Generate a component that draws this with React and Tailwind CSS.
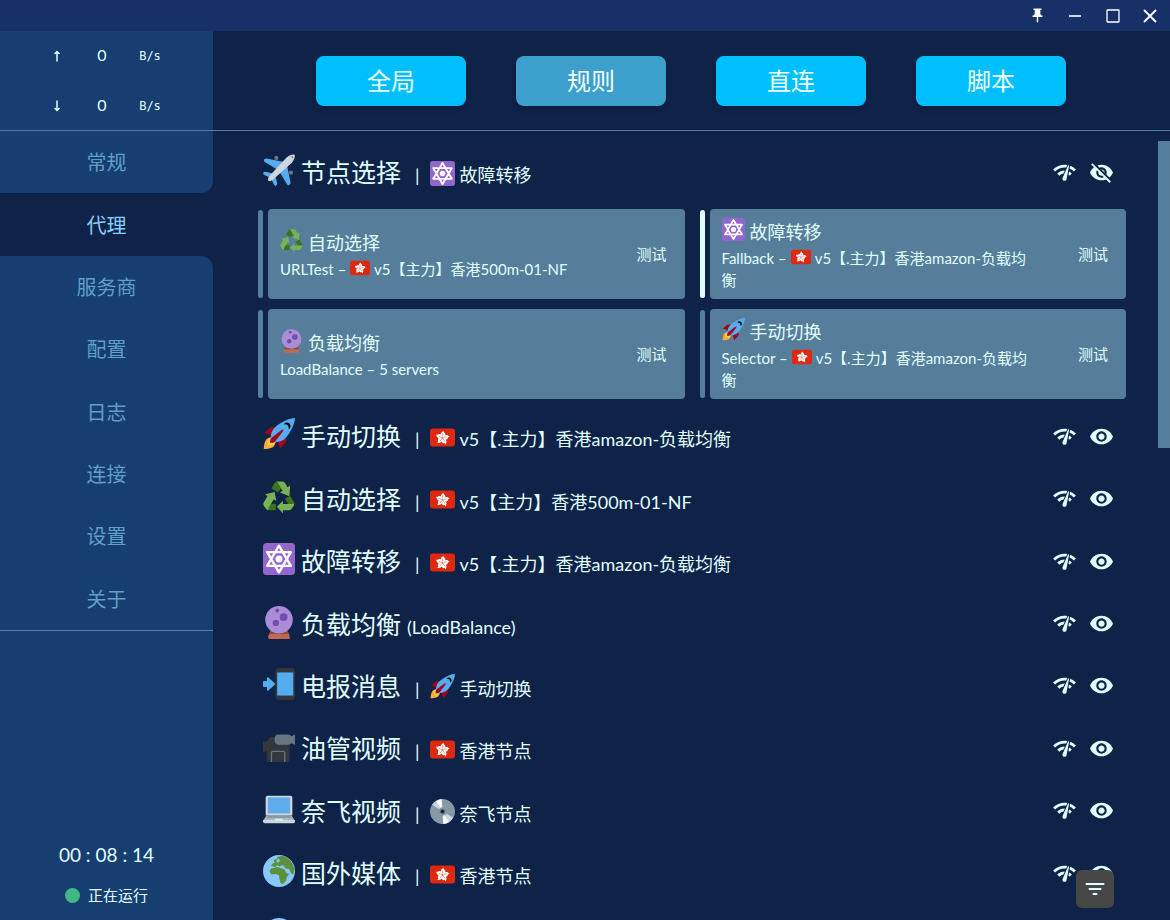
import React from "react";
import { MdNetworkCheck, MdVisibility, MdVisibilityOff, MdPushPin } from "react-icons/md";

const drawings = {
  plane: (
    <>
      <g fill="#66757f">
        <circle cx="15" cy="4.5" r="2.4" />
        <circle cx="31.500" cy="21" r="2.4" />
        <circle cx="8" cy="28" r="1.5" />
      </g>
      <path fill="#55acee" d="M1 6.500Q2 5 4 5l20 4-7 9L2 9Q.5 8 1 6.500zM29.500 35Q31 34 31 32l-4-20-9 7 9 15q1 1.500 2.500 1zM0 21.500Q1 20 3 20l8 2-3 4.500-6-2.500Q0 23 0 21.500zM14.500 36q1.500-1 1.500-3l-2-8-4.500 3 2.500 6q1 2 2.500 2z" />
      <path fill="#ccd6dd" d="M35.500.8c1 2-.5 6-3 9L12 28c-2 2-5 3-6 2s0-4 2-6L26.500 4C29.500 1 34 0 35.500.8z" />
      <path fill="#66757f" d="M31 3l2.500-.5.500 2.500z" />
    </>
  ),
  star: (
    <>
      <rect width="36" height="36" rx="4" fill="#9266cc" />
      <g fill="none" stroke="#fff" strokeWidth="2.700" strokeLinejoin="round">
        <path d="M18 3 31.300 25.700H4.700zM18 33 4.700 10.300h26.600z" />
      </g>
      <circle cx="18" cy="18" r="4" fill="#fff" />
    </>
  ),
  recycle: (
    <>
      <path fill="#3e721d" d="M9.500 8.500 13 2q2-2 4 0l3.500 6-3.500 5zM6 33h8.500v-7.500H6L3 30zM24.500 20l6-3.500L35 24q.5 2-1 2.500l-5 .5z" />
      <path fill="#77b255" d="M14.500.5H22q2 0 3 2L27.500 7l3-1.800-.8 12L19 13l3-2-5-8.500Q16 1 14.500.5zM2.500 15l10.500-2.500 2 9.800-3-1.500-5.500 9q-1 2 0 3.200Q4.500 33 3 31L.8 27.500q-1-1.500 0-3.200L5 17.200zM15.500 29l7-6.800v3.600h10Q34.500 25.800 35 25q.2 2-.5 3L32 31.500Q31 33 29 33h-6.500v3.200z" />
    </>
  ),
  rocket: (
    <>
      <path fill="#A0041E" d="M1 17l8-7 16 1 1 16-7 8s.001-5.999-6-12-12-6-12-6z" />
      <path fill="#FFAC33" d="M.973 35s-.036-7.979 2.985-11S15 21.187 15 21.187 14.999 29 11.999 32c-3 3-11.026 3-11.026 3z" />
      <circle fill="#FFCC4D" cx="8.999" cy="27" r="4" />
      <path fill="#55ACEE" d="M35.999 0s-10 0-22 10c-6 5-6 14-4 16s11 2 16-4c10-12 10-22 10-22z" />
      <path d="M26.999 5c-1.623 0-3.013.971-3.641 2.360.502-.227 1.055-.360 1.641-.360 2.209 0 4 1.791 4 4 0 .586-.133 1.139-.359 1.640 1.389-.627 2.359-2.017 2.359-3.640 0-2.209-1.791-4-4-4z" />
      <path fill="#A0041E" d="M8 28s0-4 1-5 13.001-10.999 14-10-9.001 13-10.001 14S8 28 8 28z" />
    </>
  ),
  ball: (
    <>
      <path fill="#bf6952" d="M9 27h18l3 6.500V36a1 1 0 0 1-1 1H7a1 1 0 0 1-1-1v-2.500z" />
      <path fill="#8a4633" d="M8 29h20l1 2.500H7z" />
      <circle cx="18" cy="15.500" r="15.500" fill="#aa8dd8" />
      <g fill="#744eaa">
        <circle cx="16" cy="5" r="2.200" />
        <circle cx="23.200" cy="12.500" r="4.400" />
        <circle cx="14.500" cy="19" r="3.500" />
      </g>
    </>
  ),
  flag: (
    <>
      <rect y="5" width="36" height="26" rx="4" fill="#de2910" />
      <g fill="#fff">
        {[0, 72, 144, 216, 288].map((a) => (
          <path key={a} transform={`rotate(${a + 8} 18 18.500)`} d="M18 18c-3.800-2.200-4.500-7 .5-10 -1 2 1.200 2.600 2.200 3.600 2 2.500 0 5.600-2.700 6.400z" />
        ))}
      </g>
      <g stroke="#de2910" strokeWidth=".6">
        {[0, 72, 144, 216, 288].map((a) => (
          <path key={a} transform={`rotate(${a + 8} 18 18.500)`} d="M18 17.500 17.300 12.500" />
        ))}
      </g>
    </>
  ),
  phone: (
    <>
      <rect x="14" width="22" height="36" rx="4" fill="#31373d" />
      <rect x="16" y="5" width="18" height="26" fill="#55acee" />
      <path fill="#55acee" stroke="#55acee" strokeWidth="2" strokeLinejoin="round" d="M1 15.500h4.500v-4l7 6.500-7 6.500v-4H1z" />
    </>
  ),
  camera: (
    <>
      <path fill="#31373d" d="M0 13q4 0 5-1l3-4h16v6h6v18q0 4-4 4H8q-4 0-4-4v-8L0 25z" />
      <path fill="#66757f" d="M17 5h11q3 0 4 2l4-2v12l-4-2q-1 1.500-4 1.500H17q-4 0-4-5.700T17 5z" />
      <path fill="none" stroke="#66757f" strokeWidth="1.500" d="M9.500 36V26q0-2 2-2h11q2 0 2 2v10" />
    </>
  ),
  laptop: (
    <>
      <path fill="#ccd6dd" d="M5 3h26q2 0 2 2v20H3V5q0-2 2-2z" />
      <path fill="#5dadec" d="M5.500 5h25v18h-25z" />
      <path fill="#aab8c2" d="M4 25h28l4 6.500H0z" />
      <path fill="#8899a6" d="M5.500 26h25l1.500 2H4z" />
      <path fill="#ccd6dd" d="M0 30.500h36V32q0 2-2 2H2q-2 0-2-2z" />
      <path fill="#e1e8ed" d="M14 29h8l1 2H13z" />
    </>
  ),
  disc: (
    <>
      <circle cx="18" cy="18" r="18" fill="#8899a6" />
      <path fill="#f5f8fa" d="M18 18 8 3.200Q12 .5 17 0zM18 18l1 18q5-.5 9-3z" />
      <path fill="#ccd6dd" d="M18 18 3 8l5-4.800zM18 18l10 15 5.500-6z" />
      <circle cx="18" cy="18" r="6" fill="#8899a6" />
      <circle cx="18" cy="18" r="4" fill="#657786" />
      <circle cx="18" cy="18" r="2.500" fill="#14213d" />
    </>
  ),
  globe: (
    <>
      <circle cx="18" cy="18" r="18" fill="#88c9f9" />
      <path fill="#5c913b" d="M9 12.500q1-3 4-4l-1-3 3-1L17 2l5-1.200c7 2 12 8 13.500 15.200l-1.500 6-2-1-2.500-5-4.500-1-1.500-3-3-.5-1.500 1.500-3-1.500-2 2zM8.500 15.500 16 13.500l8 2.500 2.500 4.500 3 .5-3 4.500-.5 3.500-3.500 3.500-2.500-.5-1.500-5-.5-4-3.500-1.500-5 .5-2-3z" />
      <path fill="#88c9f9" d="M15 5.500 18 4l1 3-3 2z" />
    </>
  ),
  ocean: (
    <>
      <circle cx="18" cy="18" r="18" fill="#88c9f9" />
      <path fill="#5c913b" d="M8 10l10-3 9 4 3 9-8 8-9-6z" />
    </>
  ),
};

function Emoji({ name, className }) {
  return (
    <svg viewBox="0 0 36 36" aria-hidden="true" className={`shrink-0 overflow-visible ${className}`}>
      {drawings[name]}
    </svg>
  );
}

const modes = [
  { label: "全局" },
  { label: "规则", active: true },
  { label: "直连" },
  { label: "脚本" },
];

const menu = ["常规", "代理", "服务商", "配置", "日志", "连接", "设置", "关于"];
const current = 1;

const cards = [
  { icon: "recycle", title: "自动选择", type: "URLTest –", node: "v5【主力】香港500m-01-NF" },
  { icon: "star", title: "故障转移", type: "Fallback –", node: "v5【.主力】香港amazon-负载均衡", selected: true },
  { icon: "ball", title: "负载均衡", type: "LoadBalance – 5 servers" },
  { icon: "rocket", title: "手动切换", type: "Selector –", node: "v5【.主力】香港amazon-负载均衡" },
];

const groups = [
  { icon: "rocket", title: "手动切换", nowIcon: "flag", now: "v5【.主力】香港amazon-负载均衡" },
  { icon: "recycle", title: "自动选择", nowIcon: "flag", now: "v5【主力】香港500m-01-NF" },
  { icon: "star", title: "故障转移", nowIcon: "flag", now: "v5【.主力】香港amazon-负载均衡" },
  { icon: "ball", title: "负载均衡", note: "(LoadBalance)" },
  { icon: "phone", title: "电报消息", nowIcon: "rocket", now: "手动切换" },
  { icon: "camera", title: "油管视频", nowIcon: "flag", now: "香港节点" },
  { icon: "laptop", title: "奈飞视频", nowIcon: "disc", now: "奈飞节点" },
  { icon: "globe", title: "国外媒体", nowIcon: "flag", now: "香港节点" },
  { icon: "ocean" },
];

function GroupRow({ group, open }) {
  const Eye = open ? MdVisibilityOff : MdVisibility;
  return (
    <div className="flex h-full items-center justify-between pr-3 pl-[5px]">
      <div className="flex min-h-10 items-baseline pt-1 whitespace-nowrap">
        <Emoji name={group.icon} className="mb-2 size-8 self-center" />
        {group.title && <h2 className="ml-1.5 text-[25px] leading-9">{group.title}</h2>}
        {group.note && <span className="ml-1.5 text-lg leading-6">{group.note}</span>}
        {group.now && (
          <>
            <span className="ml-3.5 text-lg leading-6">|</span>
            <Emoji name={group.nowIcon} className="mb-0.5 ml-2.5 size-[25px] self-center" />
            <span className="ml-[5px] text-lg leading-6">{group.now}</span>
          </>
        )}
      </div>
      <div className="flex gap-3">
        <button type="button" aria-label="测试延迟"><MdNetworkCheck className="size-[25px]" /></button>
        <button type="button" aria-label="显示或隐藏"><Eye className="size-[25px]" /></button>
      </div>
    </div>
  );
}

function ProxyCard({ card }) {
  return (
    <div className="flex gap-[5px]">
      <div className={`my-px w-[5px] shrink-0 rounded-sm ${card.selected ? "bg-[#e0ffff]" : "bg-[#567d99]"}`} />
      <div className="flex min-h-[90px] flex-1 items-center justify-between rounded bg-[#567d99] pr-[18px] pl-3">
        <div className="max-w-[310px]">
          <div className="flex items-center">
            <Emoji name={card.icon} className="mb-1.5 size-[23px]" />
            <h3 className="ml-[5px] text-lg leading-[30px]">{card.title}</h3>
          </div>
          <p className="text-[15px] leading-[22px]">
            {card.type}
            {card.node && (
              <>
                <Emoji name="flag" className="mx-1 -mt-1.5 inline-block size-5" />
                {card.node}
              </>
            )}
          </p>
        </div>
        <button type="button" className="text-[15px] leading-[22px]">测试</button>
      </div>
    </div>
  );
}

function Traffic({ up }) {
  return (
    <div className="grid h-[50px] grid-cols-[46px_44px_52px] items-center pl-[34px] text-center">
      <svg viewBox="0 0 8 12" role="img" aria-label={up ? "上传" : "下载"} className="mx-auto h-3 w-2" fill="none" stroke="currentColor" strokeWidth="1.500">
        {up ? <path d="M4 11.500V1.500M1.500 4 4 1.500 6.500 4" /> : <path d="M4 .5v10M1.500 8 4 10.500 6.500 8" />}
      </svg>
      <span className="pb-0.5 text-base">0</span>
      <span className="font-['DejaVu_Sans_Mono',monospace] text-xs">B/s</span>
    </div>
  );
}

function menuStyle(i) {
  if (i === current - 1) return "bg-[#163e70] text-[#5f9fc8] rounded-br-xl";
  if (i === current) return "text-[#87cefa]";
  if (i === current + 1) return "bg-[#163e70] text-[#5f9fc8] rounded-tr-xl";
  return "bg-[#163e70] text-[#5f9fc8]";
}

export default function App() {
  return (
    <div className="flex h-screen flex-col overflow-hidden bg-[#0f2247] font-[Lato,'Noto_Sans_CJK_SC',sans-serif] text-[#e0ffff]">
      <header className="flex h-[31px] shrink-0 justify-end bg-[#173168] pr-px text-white">
        <div className="grid w-[150px] grid-cols-4">
          <button type="button" aria-label="置顶" className="flex items-center justify-center"><MdPushPin className="size-[17px]" /></button>
          <button type="button" aria-label="最小化" className="flex items-center justify-center">
            <svg viewBox="0 0 14 14" className="size-3.5"><path d="M1 7h12" stroke="currentColor" strokeWidth="1.600" /></svg>
          </button>
          <button type="button" aria-label="最大化" className="flex items-center justify-center">
            <svg viewBox="0 0 14 14" className="size-3.5"><rect x="1" y="1" width="12" height="12" rx=".5" fill="none" stroke="currentColor" strokeWidth="1.300" /></svg>
          </button>
          <button type="button" aria-label="关闭" className="flex items-center justify-center">
            <svg viewBox="0 0 14 14" className="size-3.5"><path d="M1.500 1.500l11 11m0-11-11 11" stroke="currentColor" strokeWidth="1.800" strokeLinecap="round" /></svg>
          </button>
        </div>
      </header>
      <div className="flex min-h-0 flex-1">
        <aside className="flex w-[213px] shrink-0 flex-col">
          <div className="h-[100px] border-b border-[#567d99] bg-[#163e70]">
            <Traffic up />
            <Traffic />
          </div>
          <nav className="grid h-[499px] shrink-0 grid-rows-8">
            {menu.map((label, i) => (
              <a key={label} href="#" className={`flex items-center justify-center text-xl ${menuStyle(i)}`}>{label}</a>
            ))}
          </nav>
          <div className="flex flex-1 flex-col items-center justify-end gap-3 border-t border-[#567d99] bg-[#163e70] pb-[13px]">
            <div className="text-[19px] leading-8">00 : 08 : 14</div>
            <div className="flex items-center gap-2 text-[15px] leading-6">
              <span className="size-[15px] rounded-full bg-[#41b883]" />
              正在运行
            </div>
          </div>
        </aside>
        <main className="relative flex min-w-0 flex-1 flex-col">
          <div className="flex h-[100px] shrink-0 items-center justify-center gap-[50px] border-b border-[#567d99] pr-px">
            {modes.map((m) => (
              <button key={m.label} type="button" className={`h-[50px] w-[150px] rounded-lg text-2xl text-[#f0ffff] shadow-md ${m.active ? "bg-[#3d9fcb]" : "bg-[#00bfff]"}`}>{m.label}</button>
            ))}
          </div>
          <div className="flex min-h-0 flex-1 pt-2.5">
            <div className="min-w-0 flex-1 overflow-hidden pr-8 pl-[45px]">
              <div className="h-[62px]">
                <GroupRow open group={{ icon: "plane", title: "节点选择", nowIcon: "star", now: "故障转移" }} />
              </div>
              <div className="my-1.5 grid grid-cols-2 gap-x-[15px] gap-y-2.5">
                {cards.map((c) => <ProxyCard key={c.title} card={c} />)}
              </div>
              <div className="grid h-[562px] grid-rows-9">
                {groups.map((g, i) => <GroupRow key={i} group={g} />)}
              </div>
            </div>
            <div className="h-[307px] w-3 shrink-0 bg-[#567d99]" />
          </div>
          <button type="button" aria-label="筛选" className="absolute right-14 bottom-3 flex size-[38px] items-center justify-center rounded-md bg-[#474747]">
            <svg viewBox="0 0 20 14" className="h-3.5 w-5" fill="none" stroke="currentColor" strokeWidth="2" strokeLinecap="round"><path d="M1.500 2h17M4.500 7h11M8.500 12h3" /></svg>
          </button>
        </main>
      </div>
    </div>
  );
}
